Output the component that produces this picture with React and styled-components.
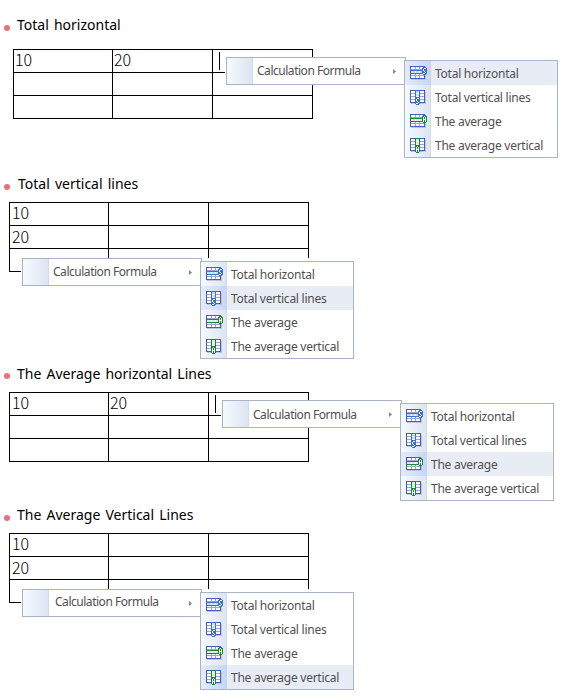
import React from "react";
import styled, { createGlobalStyle } from "styled-components";

const GlobalStyle = createGlobalStyle`
  body { margin: 0; background: #fff; }
  * { box-sizing: border-box; }
`;

const Page = styled.main`
  width: 566px;
  height: 697px;
  overflow: hidden;
  display: flex;
  flex-direction: column;
`;

const Section = styled.section`
  padding-top: ${(p) => p.$space}px;
`;

const Heading = styled.h2`
  display: flex;
  align-items: flex-start;
  margin: 0 0 ${(p) => p.$gap}px;
  padding-left: 4px;
  height: 20px;
  font: 400 14px/20px "Noto Sans", sans-serif;
  color: #000;
  white-space: nowrap;
`;

const Bullet = styled.span`
  width: 6px;
  height: 6px;
  margin: ${(p) => p.$drop}px ${(p) => p.$gap}px 0 0;
  border-radius: 50%;
  background: #e8707e;
`;

const HeadingText = styled.span`
  word-spacing: 1.5px;
`;

const TableWrap = styled.div`
  position: relative;
  width: 300px;
  margin-left: ${(p) => p.$left}px;
`;

const Table = styled.div`
  display: grid;
  grid-template-columns: 99px 100px 100px;
  grid-auto-rows: 23px;
  border-top: 1px solid #000;
  border-left: 1px solid #000;
`;

const Cell = styled.div`
  border-right: 1px solid #000;
  border-bottom: 1px solid #000;
  padding-left: ${(p) => p.$inset}px;
  font: 300 16px/${(p) => p.$line}px "Noto Sans CJK KR", sans-serif;
  letter-spacing: -0.1px;
  color: #000;
`;

const Caret = styled.span`
  position: absolute;
  left: 206px;
  top: 3px;
  width: 1px;
  height: 18px;
  background: #000;
`;

const Menu = styled.div`
  position: absolute;
  left: ${(p) => p.$x}px;
  top: ${(p) => p.$y}px;
  width: 180px;
  height: 28px;
  display: flex;
  border: 1px solid #a9b4c9;
  background: #fff;
  box-shadow: -1px 0 0 #fff, 150px 0 0 #fff;
`;

const MenuGutter = styled.span`
  flex: none;
  width: 26px;
  border-right: 1px solid #d3dbe9;
  background: linear-gradient(90deg, #f6faff, #dce5f3);
`;

const MenuLabel = styled.span`
  flex: 1;
  padding-left: ${(p) => p.$inset}px;
  font: 400 12px/${(p) => p.$line}px "Noto Sans", sans-serif;
  letter-spacing: -0.47px;
  color: #505050;
  white-space: nowrap;
`;

const Arrow = styled.svg`
  flex: none;
  width: 3px;
  height: 5px;
  margin: 11px 9px 0 0;
  fill: #7784ad;
`;

const Submenu = styled.ul`
  position: absolute;
  left: 177px;
  top: 2px;
  width: 154px;
  margin: 0;
  padding: 0;
  list-style: none;
  border: 1px solid #a9b4c9;
  background: #fff;
`;

const Item = styled.li`
  display: flex;
  height: 24px;
  background: ${(p) => (p.$active ? "#e8edf5" : "#fff")};
`;

const IconSlot = styled.span`
  flex: none;
  width: 26px;
  padding: 4px 0 0 4px;
  border-right: 1px solid ${(p) => (p.$active ? "#c6d4ee" : "#d3dbe9")};
  background: ${(p) =>
    p.$active
      ? "linear-gradient(90deg, #e4ecf9, #c6d7f6)"
      : "linear-gradient(90deg, #f6faff, #dce5f3)"};
`;

const ItemLabel = styled.span`
  padding-left: 4px;
  font: 400 12px/26px "Noto Sans", sans-serif;
  letter-spacing: -0.25px;
  color: #505050;
  white-space: nowrap;
`;

const IconSvg = styled.svg`
  display: block;
  width: 18px;
  height: 16px;
  shape-rendering: crispEdges;
`;

const sMark = "M2 1h2v1h-2zM1 2h1v2h-1zM2 4h1v1h-1zM3 5h1v1h-1zM1 6h2v1h-2z";
const aMark = "M2 1h1v1h-1zM1 2h1v5h-1zM3 2h1v5h-1zM2 4h1v1h-1z";

function GridIcon({ vertical, average }) {
  const accent = average ? "#188532" : "#3970c8";
  const fill = average ? "#d3ecec" : "#b9e0fb";
  return (
    <IconSvg viewBox="0 0 18 16" aria-hidden="true">
      <path d="M2 14h15v1H2zM16 3h1v12h-1z" fill="#bcc5da" />
      <rect x="1" y="1" width="15" height="13" fill="#fff" />
      <path d="M2 4h13v1H2zM2 7h13v1H2zM2 10h13v1H2zM6 2h1v11H6zM10 2h1v11h-1z" fill="#9da3d2" />
      <path d="M1 1h15v13H1zM2 2v11h13V2z" fillRule="evenodd" fill="#4d5ac4" />
      {vertical ? (
        <>
          <path d="M7 2h3v11H7z" fill={fill} />
          <path d="M7 4h3v1H7zM7 7h3v1H7z" fill="#fff" />
          <path d="M6 1h5v1H6zM6 2h1v12H6zM10 2h1v12h-1z" fill={accent} />
        </>
      ) : (
        <>
          <path d="M2 6h13v2H2z" fill={fill} />
          <path d="M6 6h1v2H6zM10 6h1v2h-1z" fill="#fff" />
          <path d="M1 5h15v1H1zM1 8h15v1H1z" fill={accent} />
        </>
      )}
      <g transform={vertical ? "translate(6 8)" : "translate(13 2)"}>
        <path d="M1 0h3v1h1v6h-1v1H1v-1H0V1h1z" fill={accent} />
        <path d={average ? aMark : sMark} fill="#fff" />
      </g>
    </IconSvg>
  );
}

const options = [
  { label: "Total horizontal" },
  { label: "Total vertical lines", vertical: true },
  { label: "The average", average: true },
  { label: "The average vertical", vertical: true, average: true },
];

const examples = [
  { title: "Total horizontal", space: 15, gap: 14, drop: 10, textGap: 7, left: 13, cellInset: 1, across: true, inset: 4, line: 26, active: 0 },
  { title: "Total vertical lines", space: 55, gap: 8, drop: 10, textGap: 8, left: 9, cellInset: 2, inset: 4, line: 26, active: 1 },
  { title: "The Average horizontal Lines", space: 92, gap: 8, drop: 9, textGap: 7, left: 9, cellInset: 2, across: true, inset: 4, line: 28, active: 2 },
  { title: "The Average Vertical Lines", space: 43, gap: 8, drop: 10, textGap: 7, left: 9, cellInset: 2, inset: 6, line: 24, active: 3 },
];

function Example({ data }) {
  const cells = data.across
    ? ["10", "20", "", "", "", "", "", "", ""]
    : ["10", "", "", "20", "", "", "", "", ""];
  return (
    <Section $space={data.space}>
      <Heading $gap={data.gap}>
        <Bullet $drop={data.drop} $gap={data.textGap} />
        <HeadingText>{data.title}</HeadingText>
      </Heading>
      <TableWrap $left={data.left}>
        <Table>
          {cells.map((value, i) => (
            <Cell key={i} $inset={i % 3 ? 1 : data.cellInset} $line={i < 3 ? 18 : 20}>
              {value}
            </Cell>
          ))}
        </Table>
        {data.across && <Caret />}
        <Menu $x={data.across ? 213 : 13} $y={data.across ? 8 : 56}>
          <MenuGutter />
          <MenuLabel $inset={data.inset} $line={data.line}>Calculation Formula</MenuLabel>
          <Arrow viewBox="0 0 3 5"><path d="M0 0l3 2.5L0 5z" /></Arrow>
          <Submenu>
            {options.map((o, i) => (
              <Item key={o.label} $active={i === data.active}>
                <IconSlot $active={i === data.active}>
                  <GridIcon vertical={o.vertical} average={o.average} />
                </IconSlot>
                <ItemLabel>{o.label}</ItemLabel>
              </Item>
            ))}
          </Submenu>
        </Menu>
      </TableWrap>
    </Section>
  );
}

export default function App() {
  return (
    <>
      <GlobalStyle />
      <Page>
        {examples.map((e) => (
          <Example key={e.title} data={e} />
        ))}
      </Page>
    </>
  );
}
